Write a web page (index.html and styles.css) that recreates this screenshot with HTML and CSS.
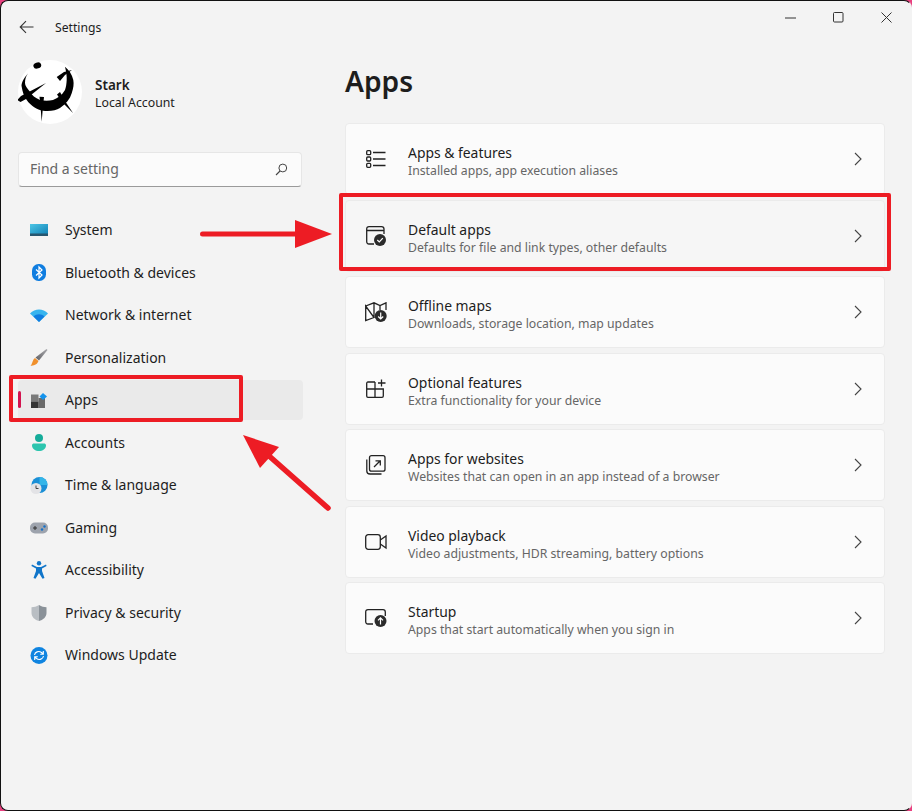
FILE: index.html
```html
<!DOCTYPE html>
<html lang="en">
<head>
<meta charset="utf-8">
<title>Settings</title>
<link rel="stylesheet" href="styles.css">
</head>
<body>
<div class="window">
  <aside class="sidebar">
    <div class="titlebar">
      <svg class="back" width="16" height="14" viewBox="0 0 16 14"><path d="M14.5 7H1.5M7 1.2 1.2 7 7 12.8" fill="none" stroke="#333" stroke-width="1.1"/></svg>
      <span class="app-title">Settings</span>
    </div>
    <div class="profile">
      <svg class="avatar" width="64" height="64" viewBox="0 0 64 64">
        <circle cx="32" cy="32" r="32" fill="#fff"/>
        <path d="M10.300 13.300C5 19 3 24 3.700 26.700 4.500 32 6 36 8.700 40 13 46 19 50 25 50.700 32 51.500 38 50.500 42 48 48 44 52 39 53.700 33.300 55.500 28 56 24 55.300 20 54 14 51 10 47 6.700 48 11 49 16 48.700 20 48.500 24 48 27 47 30 44 35 40 38 35 40 31 41 26 41 22 40 17 38 14 35 12 31.700 9 28 7 26 7 23 7 19 8 16 10.300 13.300Z" fill="#000"/>
        <path d="M-.7 40 3 36 28 23 8 39 2.500 42ZM38.700 17 46 12 54 10 47 15 42 21ZM21.500 36.700 26 37 25 46 23.700 61.700 22.500 46ZM39 34.500 42 32 47 41 55 53 44 42Z" fill="#000"/>
        <ellipse cx="19.300" cy="5.500" rx="4" ry="3" fill="#000" transform="rotate(-20 19.300 5.500)"/>
      </svg>
      <div class="profile-text">
        <div class="profile-name">Stark</div>
        <div class="profile-kind">Local Account</div>
      </div>
    </div>
    <div class="search">
      <span class="search-text">Find a setting</span>
      <svg width="13" height="13" viewBox="0 0 13 13"><circle cx="7.800" cy="5" r="3.900" fill="none" stroke="#444" stroke-width="1"/><path d="M5 8 1 12" stroke="#444" stroke-width="1.100"/></svg>
    </div>
    <nav class="nav">
      <div class="nav-item">
        <svg class="nav-icon" width="18" height="14" viewBox="0 0 18 14"><defs><linearGradient id="sys" x1="0" y1="0" x2="1" y2="1"><stop offset="0" stop-color="#4cc6e6"/><stop offset="1" stop-color="#0f7fb4"/></linearGradient></defs><rect width="18" height="11" y="1" fill="url(#sys)"/><rect y="10.500" width="18" height="2.500" fill="#27566f"/></svg>
        <span class="nav-label">System</span>
      </div>
      <div class="nav-item">
        <svg class="nav-icon" width="14" height="17" viewBox="0 0 14 17"><rect width="14" height="17" rx="6.500" fill="#0f7de0"/><path d="M4 5.500 10 11 7 14V3l3 3-6 5.500" fill="none" stroke="#fff" stroke-width="1.200"/></svg>
        <span class="nav-label">Bluetooth &amp; devices</span>
      </div>
      <div class="nav-item">
        <svg class="nav-icon" width="18" height="13" viewBox="0 0 18 13"><path d="M0 4.500C5 -1 13 -1 18 4.500L9 13Z" fill="#37b4ee"/><path d="M3.500 7.500C6.500 4.500 11.500 4.500 14.500 7.500L9 13Z" fill="#0f7de0"/></svg>
        <span class="nav-label">Network &amp; internet</span>
      </div>
      <div class="nav-item">
        <svg class="nav-icon" width="17" height="17" viewBox="0 0 17 17"><defs><linearGradient id="brush" x1="1" y1="0" x2="0" y2="1"><stop offset="0" stop-color="#a9a9ad"/><stop offset="1" stop-color="#5f5f63"/></linearGradient></defs><path d="M16 0 17 1 8.500 11.500 5 8.500Z" fill="url(#brush)"/><path d="M4.500 9 8 12C6.500 16 3 16.500 0 17 2 15 2 10.500 4.500 9Z" fill="#f0902c"/></svg>
        <span class="nav-label">Personalization</span>
      </div>
      <div class="nav-item nav-item-active">
        <span class="nav-marker"></span>
        <svg class="nav-icon" width="16" height="15" viewBox="0 0 16 15"><rect y="1.500" width="7.500" height="7" fill="#7a7a7a"/><rect x="7.500" y="5" width="6.500" height="10" fill="#6a6a6a"/><rect y="8.500" width="7.500" height="6.500" fill="#353535"/><path d="M12 0 16 3.500 12 7 8.500 3.500Z" fill="#1593ec"/></svg>
        <span class="nav-label">Apps</span>
      </div>
      <div class="nav-item">
        <svg class="nav-icon" width="14" height="17" viewBox="0 0 14 17"><circle cx="7" cy="4" r="4" fill="#15ac9a"/><path d="M0 11.500C0 10 1 9.500 2 9.500H12C13 9.500 14 10 14 11.500 14 15 10.500 17 7 17S0 15 0 11.500Z" fill="#2cc5ae"/></svg>
        <span class="nav-label">Accounts</span>
      </div>
      <div class="nav-item">
        <svg class="nav-icon" width="17" height="17" viewBox="0 0 17 17"><circle cx="9" cy="8" r="8" fill="#1a8fd6"/><path d="M9 0a8 8 0 0 1 8 8h-8Z" fill="#33b5e8"/><circle cx="5.500" cy="11.500" r="5.500" fill="#e3e3e6"/><path d="M5.500 8.500v3h2.500" fill="none" stroke="#444" stroke-width="1"/></svg>
        <span class="nav-label">Time &amp; language</span>
      </div>
      <div class="nav-item">
        <svg class="nav-icon" width="18" height="12" viewBox="0 0 18 12"><rect width="18" height="11" y=".5" rx="5" fill="#9da3ad"/><path d="M3 6h4M5 4v4" stroke="#333" stroke-width="1"/><circle cx="12" cy="7.500" r="1.200" fill="#1471c9"/><circle cx="14.500" cy="4.500" r="1.200" fill="#1471c9"/></svg>
        <span class="nav-label">Gaming</span>
      </div>
      <div class="nav-item">
        <svg class="nav-icon" width="14" height="18" viewBox="0 0 14 18"><circle cx="7" cy="2.200" r="2.200" fill="#1075c9"/><path d="M0 3.500 5 6h4l5-2.500.6 1.600L10 7.500V10l2.500 7-2 .8L7 12l-3.500 5.800-2-.8L4 10V7.500L-.6 5.100Z" fill="#1075c9"/></svg>
        <span class="nav-label">Accessibility</span>
      </div>
      <div class="nav-item">
        <svg class="nav-icon" width="15" height="16" viewBox="0 0 15 16"><path d="M7.500 0C10 1.500 12.500 2.200 15 2.200V8C15 12 11.500 15 7.500 16Z" fill="#8a9198"/><path d="M7.500 0C5 1.500 2.500 2.200 0 2.200V8C0 12 3.500 15 7.500 16Z" fill="#b9bec3"/></svg>
        <span class="nav-label">Privacy &amp; security</span>
      </div>
      <div class="nav-item">
        <svg class="nav-icon" width="17" height="17" viewBox="0 0 17 17"><circle cx="8.500" cy="8.500" r="8.500" fill="#0f84e0"/><path d="M4 8C4.500 5 8 3.500 11 5.500L12.500 7M12.800 4V7.200H9.700M13 9C12.500 12 9 13.500 6 11.500L4.500 10M4.200 13V9.800H7.300" fill="none" stroke="#fff" stroke-width="1.100"/></svg>
        <span class="nav-label">Windows Update</span>
      </div>
    </nav>
  </aside>
  <main class="content">
    <div class="window-controls">
      <svg width="11" height="2" viewBox="0 0 11 2"><path d="M0 1h11" stroke="#333" stroke-width="1"/></svg>
      <svg width="11" height="11" viewBox="0 0 11 11"><rect x=".5" y=".5" width="9.500" height="9.500" rx="1" fill="none" stroke="#333" stroke-width="1"/></svg>
      <svg width="11" height="11" viewBox="0 0 11 11"><path d="M.5.500 10.500 10.500M10.500.500.500 10.500" stroke="#333" stroke-width="1"/></svg>
    </div>
    <h1 class="page-title">Apps</h1>
    <div class="cards">
      <div class="card">
        <svg class="card-icon" width="20" height="18" viewBox="0 0 20 18"><g fill="none" stroke="#222" stroke-width="1.300"><rect x=".7" y=".7" width="4" height="4" rx="1"/><rect x=".7" y="7" width="4" height="4" rx="1"/><rect x=".7" y="13.300" width="4" height="4" rx="1"/><path d="M7 2.500h12.500M7 9h12.500M7 15.500h12.500"/></g></svg>
        <div class="card-text"><div class="card-title">Apps &amp; features</div><div class="card-desc">Installed apps, app execution aliases</div></div>
        <svg class="chev" width="8" height="14" viewBox="0 0 8 14"><path d="M1 1 7 7 1 13" fill="none" stroke="#444" stroke-width="1.100"/></svg>
      </div>
      <div class="card card-hover">
        <svg class="card-icon" width="20" height="20" viewBox="0 0 20 20"><path d="M8 18H3C1.500 18 .7 17 .7 15.500V3C.7 1.500 1.500.7 3 .7H15.500C17 .7 18 1.500 18 3V8M.8 4.500H18" fill="none" stroke="#222" stroke-width="1.300"/><circle cx="14" cy="14" r="6" fill="#2b2b2b"/><path d="M11.300 14 13.300 16 16.800 12.200" fill="none" stroke="#fff" stroke-width="1.200"/></svg>
        <div class="card-text"><div class="card-title">Default apps</div><div class="card-desc">Defaults for file and link types, other defaults</div></div>
        <svg class="chev" width="8" height="14" viewBox="0 0 8 14"><path d="M1 1 7 7 1 13" fill="none" stroke="#444" stroke-width="1.100"/></svg>
      </div>
      <div class="card">
        <svg class="card-icon" width="22" height="20" viewBox="0 0 22 20"><path d="M.7 4 9 .8 15 3.500 21 .8V8M9 .8V15.500M15 3.500V8M9 15.500.7 18.500V4Z" fill="none" stroke="#222" stroke-width="1.300"/><circle cx="15.700" cy="14" r="6" fill="#2b2b2b"/><path d="M15.700 10.500V17M13.200 14.500 15.700 17 18.200 14.500" fill="none" stroke="#fff" stroke-width="1.200"/></svg>
        <div class="card-text"><div class="card-title">Offline maps</div><div class="card-desc">Downloads, storage location, map updates</div></div>
        <svg class="chev" width="8" height="14" viewBox="0 0 8 14"><path d="M1 1 7 7 1 13" fill="none" stroke="#444" stroke-width="1.100"/></svg>
      </div>
      <div class="card">
        <svg class="card-icon" width="20" height="19" viewBox="0 0 20 19"><path d="M9 3H2C1.200 3 .7 3.600.7 4.400V17C.7 17.800 1.200 18.300 2 18.300H16C16.800 18.300 17.300 17.800 17.300 17V10H.7M9 3V18.300M15.500 .5V7.500M12 4H19.500" fill="none" stroke="#222" stroke-width="1.300"/></svg>
        <div class="card-text"><div class="card-title">Optional features</div><div class="card-desc">Extra functionality for your device</div></div>
        <svg class="chev" width="8" height="14" viewBox="0 0 8 14"><path d="M1 1 7 7 1 13" fill="none" stroke="#444" stroke-width="1.100"/></svg>
      </div>
      <div class="card">
        <svg class="card-icon" width="20" height="20" viewBox="0 0 20 20"><g fill="none" stroke="#222" stroke-width="1.300"><rect x="3.500" y=".7" width="15.500" height="15.500" rx="2"/><path d="M.8 4.500V16C.8 18 2 19 4 19H15.500M8 12 14 6M9.500 5.800H14.300V10.500"/></g></svg>
        <div class="card-text"><div class="card-title">Apps for websites</div><div class="card-desc">Websites that can open in an app instead of a browser</div></div>
        <svg class="chev" width="8" height="14" viewBox="0 0 8 14"><path d="M1 1 7 7 1 13" fill="none" stroke="#444" stroke-width="1.100"/></svg>
      </div>
      <div class="card">
        <svg class="card-icon" width="22" height="16" viewBox="0 0 22 16"><g fill="none" stroke="#222" stroke-width="1.300"><rect x=".7" y=".7" width="14.600" height="14.600" rx="2.500"/><path d="M15.300 6 21 2V14L15.300 10"/></g></svg>
        <div class="card-text"><div class="card-title">Video playback</div><div class="card-desc">Video adjustments, HDR streaming, battery options</div></div>
        <svg class="chev" width="8" height="14" viewBox="0 0 8 14"><path d="M1 1 7 7 1 13" fill="none" stroke="#444" stroke-width="1.100"/></svg>
      </div>
      <div class="card">
        <svg class="card-icon" width="22" height="18" viewBox="0 0 22 18"><path d="M8 15H3C1.500 15 .7 14 .7 12.500V3C.7 1.500 1.500.7 3 .7H18C19.500.7 20.300 1.500 20.300 3V7" fill="none" stroke="#222" stroke-width="1.300"/><circle cx="15.500" cy="12" r="6" fill="#2b2b2b"/><path d="M15.500 15.500V9M13 11.300 15.500 8.800 18 11.300" fill="none" stroke="#fff" stroke-width="1.200"/></svg>
        <div class="card-text"><div class="card-title">Startup</div><div class="card-desc">Apps that start automatically when you sign in</div></div>
        <svg class="chev" width="8" height="14" viewBox="0 0 8 14"><path d="M1 1 7 7 1 13" fill="none" stroke="#444" stroke-width="1.100"/></svg>
      </div>
    </div>
  </main>
  <div class="callout callout-apps"></div>
  <div class="callout callout-default"></div>
  <svg class="arrows" width="912" height="811" viewBox="0 0 912 811">
    <path d="M202.500 234H296" stroke="#ed1c24" stroke-width="5" stroke-linecap="round"/>
    <path d="M295 220 332 234 295 248Z" fill="#ed1c24"/>
    <path d="M328 508 268 455" stroke="#ed1c24" stroke-width="5.500" stroke-linecap="round"/>
    <path d="M243 435 279 447 260 468Z" fill="#ed1c24"/>
  </svg>
</div>
</body>
</html>
```
FILE: styles.css
```css
* { box-sizing: border-box; }
html, body { margin: 0; height: 100%; }
body { background: #e8407f; overflow: hidden; }
.window {
  position: relative;
  width: 912px;
  height: 811px;
  display: flex;
  background: #f3f3f3;
  border: 1px solid #111;
  border-right-color: #f3f3f3;
  border-radius: 8px;
  font-family: "Noto Sans", sans-serif;
  color: #1d1d1d;
}
.sidebar { width: 344px; padding: 0 0 0 17px; flex: none; }
.titlebar { height: 52px; display: flex; align-items: center; padding-left: 1px; }
.back { margin-right: 20px; }
.app-title { font-size: 12.200px; }
.profile { display: flex; align-items: center; height: 64px; margin-top: 7px; }
.profile-text { margin-left: 13px; margin-top: 3px; }
.profile-name { font-size: 13.500px; font-weight: 600; line-height: 18px; }
.profile-kind { font-size: 12.300px; line-height: 17px; }
.search {
  width: 284px;
  height: 35px;
  margin-top: 28px;
  padding: 0 13px 0 11px;
  display: flex;
  align-items: center;
  justify-content: space-between;
  background: #fbfbfb;
  border: 1px solid #e6e6e6;
  border-bottom-color: #9a9a9a;
  border-radius: 4px;
}
.search-text { font-size: 14px; color: #666; padding-bottom: 2px; }
.nav { margin-top: 23px; display: flex; flex-direction: column; gap: 2.500px; width: 285px; }
.nav-item { position: relative; height: 40px; display: flex; align-items: center; border-radius: 4px; font-size: 14px; }
.nav-item-active { background: #eaeaea; }
.nav-icon { flex: none; width: 42px; margin-right: 5px; }
.nav-label { padding-bottom: 1px; }
.nav-marker { position: absolute; left: 0; top: 11px; width: 3px; height: 17px; border-radius: 2px; background: #d3144f; }
.content { flex: 1; position: relative; padding-right: 26px; }
.window-controls { position: absolute; top: 11px; right: 19px; display: flex; align-items: center; gap: 37px; }
.page-title { margin: 59px 0 21px; font-size: 28.200px; line-height: 42px; font-weight: 600; height: 42px; }
.cards { display: flex; flex-direction: column; gap: 4.500px; }
.card {
  height: 72px;
  display: flex;
  align-items: center;
  padding: 0 22px 0 0;
  background: #fbfbfb;
  border: 1px solid #ebebeb;
  border-radius: 4px;
}
.card-hover { background: #f6f6f6; }
.card-icon { flex: none; width: 60px; margin-right: 2px; }
.card-text { flex: 1; padding-top: 5px; }
.card-title { font-size: 13.900px; line-height: 18px; }
.card-desc { font-size: 12.250px; line-height: 17px; color: #666; }
.chev { flex: none; }
.callout { position: absolute; border: 4px solid #ed1c24; border-radius: 2px; pointer-events: none; }
.callout-apps { left: 8px; top: 374px; width: 234px; height: 46.500px; }
.callout-default { left: 338px; top: 192px; width: 552px; height: 78px; }
.arrows { position: absolute; left: -1px; top: -1px; pointer-events: none; }
```
